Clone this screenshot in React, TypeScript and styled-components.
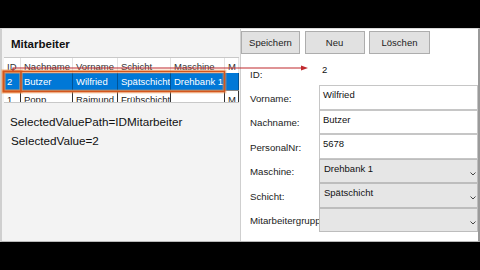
import styled, { createGlobalStyle } from 'styled-components';

const GlobalStyle = createGlobalStyle`
  html, body {
    margin: 0;
    padding: 0;
    background: #000;
  }
  body {
    font-family: "Liberation Sans", Arial, sans-serif;
  }
`;

const columns = '17px 52px 45px 53px 54px 1fr';

const rows = [
  { id: '2', nachname: 'Butzer', vorname: 'Wilfried', schicht: 'Spätschicht', maschine: 'Drehbank 1', m: '', selected: true },
  { id: '1', nachname: 'Popp', vorname: 'Raimund', schicht: 'Frühschicht', maschine: '', m: 'M', selected: false },
];

const Chevron = () => (
  <svg width="6" height="4" viewBox="0 0 6 4">
    <path d="M0.5 0.5 L3 3 L5.5 0.5" fill="none" stroke="#444" strokeWidth="1" />
  </svg>
);

export default function App() {
  return (
    <>
      <GlobalStyle />
      <Screen>
        <Window>
          <LeftPanel>
            <Title>Mitarbeiter</Title>
            <Grid>
              <GridRow>
                {['ID', 'Nachname', 'Vorname', 'Schicht', 'Maschine', 'M'].map((h) => (
                  <HeaderCell key={h}>{h}</HeaderCell>
                ))}
              </GridRow>
              {rows.map((r) => (
                <DataRow key={r.id} $selected={r.selected}>
                  <Cell $selected={r.selected}>{r.id}</Cell>
                  <Cell $selected={r.selected}>{r.nachname}</Cell>
                  <Cell $selected={r.selected}>{r.vorname}</Cell>
                  <Cell $selected={r.selected}>{r.schicht}</Cell>
                  <Cell $selected={r.selected}>{r.maschine}</Cell>
                  <Cell $selected={r.selected}>{r.m}</Cell>
                </DataRow>
              ))}
            </Grid>
            <Info>
              <InfoLine>SelectedValuePath=IDMitarbeiter</InfoLine>
              <InfoLine $indent>SelectedValue=2</InfoLine>
            </Info>
          </LeftPanel>

          <RightPanel>
            <ButtonRow>
              <Button $width={59}>Speichern</Button>
              <Button $width={60}>Neu</Button>
              <Button $width={61}>Löschen</Button>
            </ButtonRow>
            <Form>
              <Label>ID:</Label>
              <Value>2</Value>
              <Label>Vorname:</Label>
              <TextBox>Wilfried</TextBox>
              <Label>Nachname:</Label>
              <TextBox>Butzer</TextBox>
              <Label>PersonalNr:</Label>
              <TextBox>5678</TextBox>
              <Label>Maschine:</Label>
              <Combo>
                <span>Drehbank 1</span>
                <Chevron />
              </Combo>
              <Label>Schicht:</Label>
              <Combo>
                <span>Spätschicht</span>
                <Chevron />
              </Combo>
              <Label>Mitarbeitergruppe:</Label>
              <Combo>
                <span />
                <Chevron />
              </Combo>
            </Form>
          </RightPanel>

          {/* Markierungen aus dem Video */}
          <Overlay viewBox="0 0 480 214">
            <rect x="3.5" y="43.5" width="221" height="20" fill="none" stroke="rgba(245,160,90,0.45)" strokeWidth="4" />
            <rect x="3.5" y="43.5" width="17.5" height="20" fill="none" stroke="rgba(245,160,90,0.45)" strokeWidth="4" />
            <rect x="3.5" y="43.5" width="221" height="20" fill="none" stroke="#d4561c" strokeWidth="1.6" />
            <rect x="3.5" y="43.5" width="17.5" height="20" fill="none" stroke="#d4561c" strokeWidth="1.6" />
            <polyline points="13,43 13,40 302,40" fill="none" stroke="#c0282d" strokeWidth="1.2" />
            <polygon points="301,37.5 308,40 301,42.5" fill="#c0282d" />
          </Overlay>
        </Window>
      </Screen>
    </>
  );
}

const Screen = styled.div`
  width: 480px;
  height: 270px;
  padding-top: 28px;
  box-sizing: border-box;
  background: #000;
`;

const Window = styled.div`
  position: relative;
  height: 214px;
  box-sizing: border-box;
  display: grid;
  grid-template-columns: 238px 1fr;
  background: #fff;
  border-left: 2px solid #cfcfcf;
  border-right: 2px solid #9a9a9a;
  border-top: 1px solid #d8d8d8;
  border-bottom: 1px solid #b8b8b8;
`;

const LeftPanel = styled.div`
  display: flex;
  flex-direction: column;
  background: #f3f3f3;
  padding-left: 2px;
`;

const Title = styled.div`
  margin: 8px 0 0 7px;
  font-size: 11.5px;
  font-weight: bold;
  line-height: 14px;
  color: #111;
`;

const Grid = styled.div`
  margin-top: 6px;
  width: 235px;
  height: 46px;
  box-sizing: border-box;
  overflow: hidden;
  background: #fff;
  border-top: 1px solid #c8c8c8;
  border-bottom: 1px solid #c8c8c8;
`;

const GridRow = styled.div`
  display: grid;
  grid-template-columns: ${columns};
  height: 15px;
`;

const HeaderCell = styled.div`
  display: flex;
  align-items: flex-end;
  padding: 0 2px 1px 3px;
  font-size: 9.5px;
  color: #333;
  white-space: nowrap;
  overflow: hidden;
  border-right: 1px solid #e2e2e2;
`;

const DataRow = styled.div<{ $selected: boolean }>`
  display: grid;
  grid-template-columns: ${columns};
  height: 17px;
  background: ${(p) => (p.$selected ? '#0078d7' : '#fff')};
  border-top: ${(p) => (p.$selected ? 'none' : '1px solid #888')};
`;

const Cell = styled.div<{ $selected: boolean }>`
  display: flex;
  align-items: center;
  padding: 0 2px 0 3px;
  font-size: 9.5px;
  white-space: nowrap;
  overflow: hidden;
  color: ${(p) => (p.$selected ? '#fff' : '#222')};
  border-right: 1px solid ${(p) => (p.$selected ? 'rgba(0,0,0,0.3)' : '#333')};
`;

const Info = styled.div`
  margin: 9px 0 0 6px;
  font-size: 11.7px;
  line-height: 19px;
  color: #111;
`;

const InfoLine = styled.div<{ $indent?: boolean }>`
  padding-left: ${(p) => (p.$indent ? '1px' : '0')};
`;

const RightPanel = styled.div`
  background: #fff;
  border-left: 1px solid #cfcfcf;
  padding-top: 2px;
`;

const ButtonRow = styled.div`
  display: flex;
  gap: 4.5px;
`;

const Button = styled.button<{ $width: number }>`
  width: ${(p) => p.$width}px;
  height: 23px;
  padding: 0;
  background: #e1e1e1;
  border: 1px solid #adadad;
  font-family: inherit;
  font-size: 9.5px;
  color: #222;
`;

const Form = styled.div`
  margin-top: 7px;
  display: grid;
  grid-template-columns: 78px 1fr;
  grid-template-rows: 24px;
  grid-auto-rows: 24.5px;
`;

const Label = styled.div`
  align-self: center;
  padding: 2px 0 0 9px;
  font-size: 9.7px;
  color: #222;
  white-space: nowrap;
  overflow: hidden;
`;

const Value = styled.div`
  padding: 3px 3px;
  font-size: 9.5px;
  color: #111;
`;

const TextBox = styled.div`
  box-sizing: border-box;
  padding: 3px 3px;
  background: #fff;
  border: 1px solid #c6c6c6;
  font-size: 9.5px;
  color: #111;
`;

const Combo = styled.div`
  box-sizing: border-box;
  display: flex;
  justify-content: space-between;
  padding: 3px 1px 0 4px;
  background: #e6e6e6;
  border: 1px solid #bdbdbd;
  font-size: 9.5px;
  color: #111;

  svg {
    align-self: center;
    margin-top: 3px;
  }
`;

const Overlay = styled.svg`
  position: absolute;
  top: -1px;
  left: -2px;
  width: 480px;
  height: 214px;
  pointer-events: none;
`;
